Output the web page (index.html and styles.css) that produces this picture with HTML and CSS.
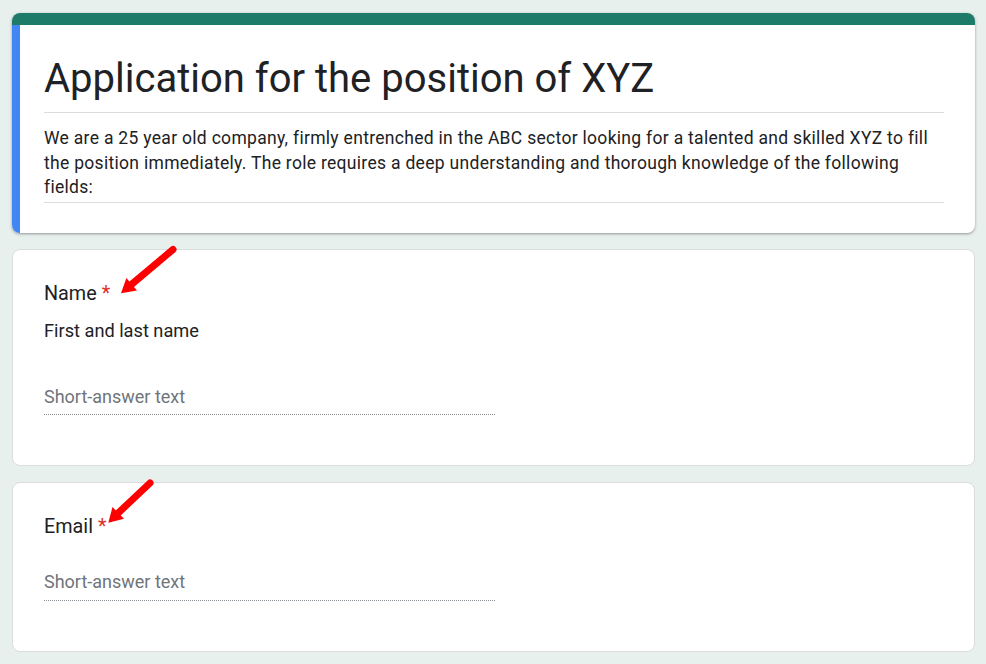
FILE: index.html
```html
<!DOCTYPE html>
<html lang="en">
<head>
<meta charset="utf-8">
<title>Application for the position of XYZ</title>
<link rel="stylesheet" href="styles.css">
</head>
<body>
<main class="form">
  <section class="header-card">
    <div class="header-accent"></div>
    <div class="header-body">
      <h1 class="form-title">Application for the position of XYZ</h1>
      <p class="form-desc">We are a 25 year old company, firmly entrenched in the ABC sector looking for a talented and skilled XYZ to fill the position immediately. The role requires a deep understanding and thorough knowledge of the following fields:</p>
    </div>
  </section>

  <section class="q-card">
    <div class="q-title">Name <span class="req">*</span></div>
    <div class="q-help">First and last name</div>
    <div class="q-input q-input-help">Short-answer text</div>
  </section>

  <section class="q-card">
    <div class="q-title">Email <span class="req">*</span></div>
    <div class="q-input">Short-answer text</div>
  </section>
</main>

<svg class="annotations" width="986" height="664" viewBox="0 0 986 664" aria-hidden="true">
  <line x1="173" y1="249.5" x2="131.7" y2="284.3" stroke="#ff0000" stroke-width="7" stroke-linecap="round"/>
  <polygon points="121,293.3 137,290.6 126.4,278" fill="#ff0000"/>
  <line x1="150" y1="483" x2="118.3" y2="512.9" stroke="#ff0000" stroke-width="7" stroke-linecap="round"/>
  <polygon points="108.3,522.7 124,518.8 112.5,507" fill="#ff0000"/>
</svg>
</body>
</html>
```

FILE: styles.css
```css
html, body {
  margin: 0;
  padding: 0;
}

body {
  background: #e8f0ee;
  font-family: Roboto, "Liberation Sans", Arial, sans-serif;
  color: #202124;
  width: 986px;
  height: 664px;
  overflow: hidden;
  position: relative;
}

.form {
  padding: 13px 11px 0 12px;
  display: flex;
  flex-direction: column;
  gap: 16px;
}

.header-card {
  background: #fff;
  border-radius: 8px;
  overflow: hidden;
  box-shadow: 0 1px 2px rgba(60, 64, 67, 0.35), 0 1px 3px 1px rgba(60, 64, 67, 0.12);
}

.header-accent {
  height: 12px;
  background: #1e7b69;
}

.header-body {
  border-left: 8px solid #4285f4;
  padding: 28px 31px 30px 24px;
}

.form-title {
  margin: 0;
  font-size: 40px;
  font-weight: 400;
  line-height: 52px;
  padding-bottom: 7px;
  border-bottom: 1px solid #dadce0;
}

.form-desc {
  margin: 13px 0 0 0;
  font-size: 17.5px;
  letter-spacing: 0.3px;
  line-height: 24.5px;
  padding-bottom: 2px;
  border-bottom: 1px solid #dadce0;
}

.q-card {
  background: #fff;
  border: 1px solid #dadce0;
  border-radius: 8px;
  padding: 32px 24px 50px 31px;
}

.q-title {
  font-size: 19.8px;
  line-height: 24px;
}

.req {
  color: #d93025;
}

.q-help {
  margin-top: 13px;
  font-size: 18.2px;
  line-height: 24px;
}

.q-input {
  width: 451px;
  margin-top: 31px;
  font-size: 18px;
  line-height: 24px;
  color: #70757a;
  padding-bottom: 6px;
  border-bottom: 1px dotted #8a8f94;
}

.q-input-help {
  margin-top: 42px;
  padding-bottom: 5px;
}

.annotations {
  position: absolute;
  left: 0;
  top: 0;
  pointer-events: none;
}
```
